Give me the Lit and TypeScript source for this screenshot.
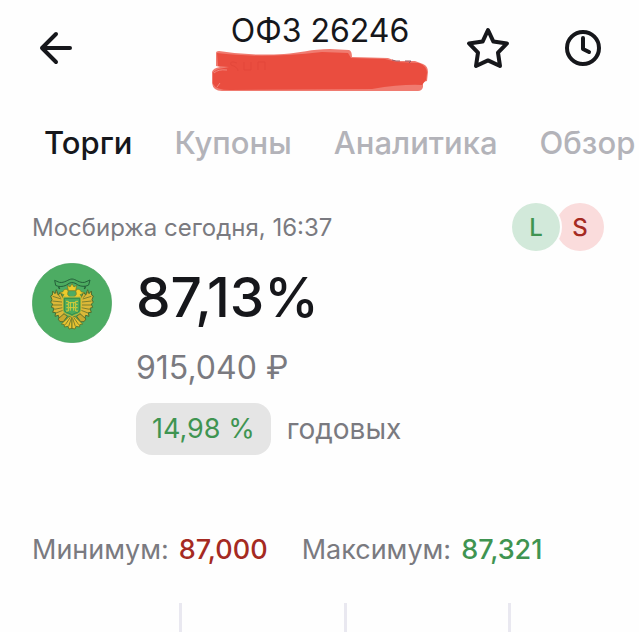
import { LitElement, html, css, svg } from "lit";
import { customElement, state } from "lit/decorators.js";
import { classMap } from "lit/directives/class-map.js";

const TABS = ["Торги", "Купоны", "Аналитика", "Обзор"];

@customElement("bond-emblem")
class BondEmblem extends LitElement {
  static styles = css`
    :host { display: block; width: 80px; height: 80px; flex: none; }
    .emblem { display: block; width: 100%; height: 100%; }
  `;

  private half() {
    return svg`
      <path d="M128 126 L121 112 L115 120 L109 104 L105 116 L98 108 L97 120 L92 123 L96 134 L92 142 L98 147 L94 157 L102 160 L98 172 L107 173 L105 184 L115 181 L118 192 L128 185 L134 174 L132 134 Z" fill="#dcb838" stroke="#4c6e30" stroke-width="3"/>
      <path d="M98 124 L124 132 M97 138 L126 141 M98 150 L126 150 M103 163 L128 158 M108 174 L131 165 M109 112 L122 128" stroke="#69762c" stroke-width="2.5" fill="none"/>
      <path d="M150 122 C142 124 142 116 145 108 C141 100 131 102 129 110 L118 113 L132 119 L126 126 L143 128" fill="#edcb2c" stroke="#6b7a28" stroke-width="2"/>
      <path d="M114 192 L132 176 L142 184 L130 200 L120 200 Z" fill="#c8a92f" stroke="#4b652b" stroke-width="2.5"/>
      <path d="M156 182 L146 186 L124 207 L133 209 L133 216 L144 214 L147 222 L156 220 Z" fill="#e8c331" stroke="#5c722a" stroke-width="2.5"/>
      <path d="M151 187 L136 209 M154 190 L146 214" stroke="#6a722a" stroke-width="2.5"/>
      <path d="M124 93 C119 88 112 97 120 101" fill="none" stroke="#245c35" stroke-width="4"/>
    `;
  }

  render() {
    return html`
      <svg class="emblem" viewBox="36 24 240 240" aria-hidden="true">
        <circle cx="156" cy="144" r="119" fill="#4dac63" stroke="#47a05c" stroke-width="2"/>
        ${this.half()}
        <g transform="matrix(-1 0 0 1 312 0)">${this.half()}</g>
        <path d="M104 76 L118 82 C134 85 145 72 156 72 C167 72 178 85 194 82 L210 75 L206 90 C194 97 177 94 168 86 C159 81 151 82 144 87 C134 95 118 97 107 91 Z" fill="#4cab60" stroke="#24603a" stroke-width="3"/>
        <path d="M145 107 L142 91 L150 96 L156 86 L162 96 L170 91 L167 107 Z" fill="#edcb2a" stroke="#6b7628" stroke-width="2"/>
        <path d="M129 126 H183 V166 C183 178 165 178 156 185 C147 178 129 178 129 166 Z" fill="#4bab5c" stroke="#d7bb31" stroke-width="3"/>
        <path d="M133 130 H179 V164 C178 173 164 173 156 180 C148 173 134 173 133 164 Z" fill="none" stroke="#2f7b40" stroke-width="2"/>
        <path d="M138 139 H145 V148 H139 M138 168 H145 V158 H139 M174 139 H167 V148 H173 M174 168 H167 V158 H173 M151 142 V167 M161 142 V167 M145 148 V158 M167 148 V158 M147 143 H165 M147 158 H165" fill="none" stroke="#d9cc38" stroke-width="3"/>
      </svg>
    `;
  }
}

@customElement("app-root")
class AppRoot extends LitElement {
  @state() private active = 0;

  static styles = css`
    :host {
      display: flex;
      flex-direction: column;
      min-height: 100vh;
      overflow: hidden;
      background: #fefefe;
      color: #16171b;
      font-family: Inter, "Liberation Sans", sans-serif;
    }
    button { border: 0; padding: 0; background: none; color: inherit; font: inherit; cursor: pointer; }
    svg { display: block; }
    h1, p { margin: 0; font-weight: 400; }
    .header {
      display: grid;
      grid-template-columns: 1fr auto 1fr;
      padding: 11px 31px 0 32px;
    }
    .icon { width: 48px; height: 48px; }
    .start { padding-top: 13px; }
    .end { padding-top: 13px; display: flex; justify-content: flex-end; gap: 48px; }
    .heading { display: flex; flex-direction: column; align-items: center; }
    .title { font-size: 32px; line-height: 40px; white-space: nowrap; }
    .scribble { overflow: visible; }
    .tabs {
      display: flex;
      gap: 42px;
      padding: 30px 0 0 44px;
      overflow: hidden;
    }
    .tab {
      flex: none;
      font-size: 31px;
      line-height: 40px;
      font-weight: 500;
      color: #b3b3b9;
    }
    .tab.active { color: #16171b; }
    .venue {
      display: flex;
      align-items: center;
      justify-content: space-between;
      padding: 40px 35px 0 32px;
      font-size: 24px;
      color: #7a7a80;
    }
    .sides { display: flex; }
    .side {
      width: 48px;
      height: 48px;
      border-radius: 50%;
      font-weight: 500;
      text-align: center;
    }
    .long { background: #d2e9da; color: #3f9451; box-shadow: 0 0 0 2px #fefefe; position: relative; z-index: 1; margin-right: -4px; }
    .short { background: #fadcdc; color: #a52a22; }
    .quote { display: flex; gap: 24px; padding: 12px 32px 0; }
    .figures { display: flex; flex-direction: column; padding-top: 2px; }
    .price { font-size: 55px; line-height: 64px; font-weight: 500; }
    .value { font-size: 32px; line-height: 40px; padding-top: 19px; color: #7a7a80; }
    .yield {
      display: flex;
      align-items: center;
      gap: 16px;
      padding-top: 15px;
      font-size: 28px;
      color: #7a7a80;
    }
    .rate { padding: 0 16px; border-radius: 16px; font-size: 27px; line-height: 52px; background: #e5e5e5; color: #3f9451; }
    .range {
      display: flex;
      flex-wrap: wrap;
      gap: 0 34px;
      padding: 75px 32px 0;
      font-size: 27px;
      line-height: 40px;
      color: #7a7a80;
    }
    .range p { display: flex; gap: 10px; }
    .range b { font-weight: 500; }
    .low { color: #a52a22; }
    .high { color: #3f9451; }
    .chart {
      flex: 1;
      display: grid;
      grid-template-columns: repeat(3, 35.8%);
      min-height: 29px;
      margin-top: 33px;
      padding-left: 28%;
      overflow: hidden;
    }
    .line { border-left: 3px solid #e9e8f0; }
  `;

  render() {
    return html`
      <header class="header">
        <div class="start">
          <button class="icon" aria-label="Назад">
            <svg width="48" height="48" viewBox="0 0 48 48" fill="none" stroke="#16171b" stroke-width="4" stroke-linecap="round" stroke-linejoin="round">
              <path d="M38 24 H10 M24 10 L10 24 L24 38"/>
            </svg>
          </button>
        </div>
        <div class="heading">
          <h1 class="title">ОФЗ 26246</h1>
          <svg class="scribble" width="216" height="42" viewBox="0 1 216 42" aria-hidden="true">
            <path d="M4 3 Q4 1 7 1 Q36 6 72 4 C88 3 99 -1 118 -1 L137 0 Q140 1 140 7 L176 8 L184 11 L203 11 L211 14 Q216 16 216 22 L215 31 L211 32 L211 37 Q210 41 206 41 L10 41 Q1 41 0 33 L0 22 Q1 18 8 17 L4 16 Z" fill="#f07b70"/>
            <path d="M5 3 Q36 7 75 5 Q94 4 110 2 L136 3 L139 8 L173 9 L185 12 L207 13 Q215 16 215 23 L214 30 L210 35 Q190 34 160 39 L18 40 Q4 40 1 34 L1 23 Q3 19 12 18 L17 17 L6 16 Z" fill="#ea4d3f"/>
            <path d="M180 10 L184 11 H188 M193 11 H199 L197 13" fill="none" stroke="#9c5660" stroke-width="1"/>
            <path d="M25 13 Q17 10 19 15 Q26 17 26 21 M32 12 V20 H39 V12 M46 20 V12 H53 V20" fill="none" stroke="#e3473a" stroke-width="1"/>
            <path d="M5 37 L8 33 M2 23 Q6 19 15 20" fill="none" stroke="#f1877d" stroke-width="1"/>
          </svg>
        </div>
        <div class="end">
          <button class="icon" aria-label="В избранное">
            <svg width="48" height="48" viewBox="0 0 48 48" fill="none" stroke="#16171b" stroke-width="4" stroke-linejoin="round">
              <path d="M24 6 L29.4 17.6 L43 19.4 L34 28.6 L36 42 L24 36.4 L12 42 L14 28.6 L5 19.4 L18.6 17.6 Z"/>
            </svg>
          </button>
          <button class="icon" aria-label="История">
            <svg width="48" height="48" viewBox="0 0 48 48" fill="none" stroke="#16171b" stroke-width="4" stroke-linecap="round" stroke-linejoin="round">
              <circle cx="23" cy="24" r="16"/>
              <path d="M23 14 V25 L29 28"/>
            </svg>
          </button>
        </div>
      </header>
      <nav class="tabs">
        ${TABS.map(
          (name, i) => html`<button
            class=${classMap({ tab: true, active: i === this.active })}
            @click=${() => (this.active = i)}
          >${name}</button>`
        )}
      </nav>
      <main>
        <div class="venue">
          <p>Мосбиржа сегодня, 16:37</p>
          <div class="sides">
            <button class="side long">L</button>
            <button class="side short">S</button>
          </div>
        </div>
        <section class="quote">
          <bond-emblem></bond-emblem>
          <div class="figures">
            <p class="price">87,13%</p>
            <p class="value">915,040 ₽</p>
            <p class="yield"><span class="rate">14,98 %</span><span>годовых</span></p>
          </div>
        </section>
        <div class="range">
          <p>Минимум: <b class="low">87,000</b></p>
          <p>Максимум: <b class="high">87,321</b></p>
        </div>
      </main>
      <div class="chart">
        <div class="line"></div>
        <div class="line"></div>
        <div class="line"></div>
      </div>
    `;
  }
}
